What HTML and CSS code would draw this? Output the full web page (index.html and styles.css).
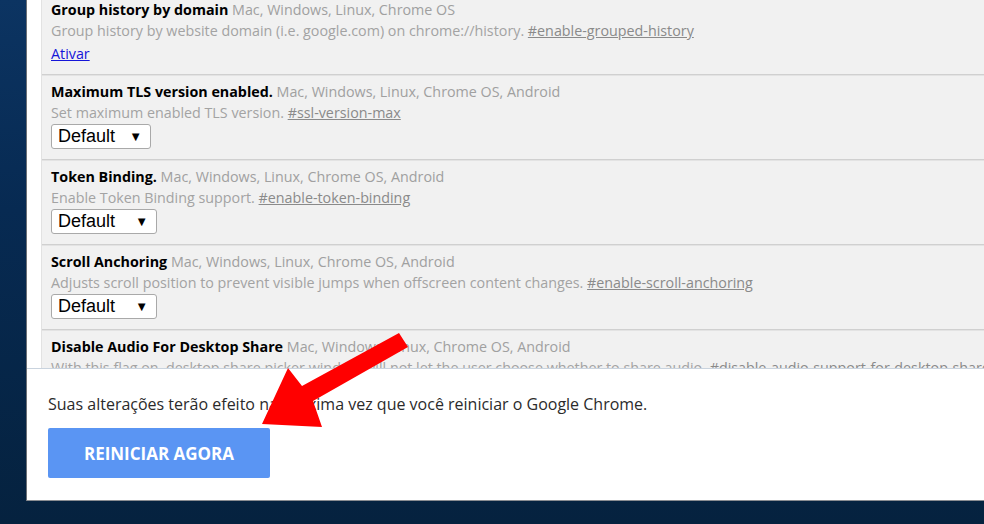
FILE: index.html
```html
<!DOCTYPE html>
<html lang="pt">
<head>
<meta charset="utf-8">
<title>Flags</title>
<link rel="stylesheet" href="styles.css">
</head>
<body>
<div class="desktop">
  <div class="window">
    <div class="content">
      <div class="flags">
        <div class="row first">
          <div class="title"><b>Group history by domain</b> <span class="plat">Mac, Windows, Linux, Chrome OS</span></div>
          <div class="desc">Group history by website domain (i.e. google.com) on chrome://history. <a class="hash">#enable-grouped-history</a></div>
          <div class="action"><a class="enable">Ativar</a></div>
        </div>
        <div class="row">
          <div class="title"><b>Maximum TLS version enabled.</b> <span class="plat">Mac, Windows, Linux, Chrome OS, Android</span></div>
          <div class="desc">Set maximum enabled TLS version. <a class="hash">#ssl-version-max</a></div>
          <div class="select"><span>Default</span><span class="tri">▼</span></div>
        </div>
        <div class="row">
          <div class="title"><b>Token Binding.</b> <span class="plat">Mac, Windows, Linux, Chrome OS, Android</span></div>
          <div class="desc">Enable Token Binding support. <a class="hash">#enable-token-binding</a></div>
          <div class="select wide"><span>Default</span><span class="tri">▼</span></div>
        </div>
        <div class="row">
          <div class="title"><b>Scroll Anchoring</b> <span class="plat">Mac, Windows, Linux, Chrome OS, Android</span></div>
          <div class="desc">Adjusts scroll position to prevent visible jumps when offscreen content changes. <a class="hash">#enable-scroll-anchoring</a></div>
          <div class="select wide"><span>Default</span><span class="tri">▼</span></div>
        </div>
        <div class="row">
          <div class="title"><b>Disable Audio For Desktop Share</b> <span class="plat">Mac, Windows, Linux, Chrome OS, Android</span></div>
          <div class="desc">With this flag on, desktop share picker window will not let the user choose whether to share audio. <a class="hash">#disable-audio-support-for-desktop-share</a></div>
          <div class="select"><span>Default</span><span class="tri">▼</span></div>
        </div>
      </div>
    </div>
    <div class="footer">
      <div class="notice">Suas alterações terão efeito na próxima vez que você reiniciar o Google Chrome.</div>
      <button class="restart">REINICIAR AGORA</button>
    </div>
  </div>
</div>
<svg class="arrow" width="984" height="524" viewBox="0 0 984 524" xmlns="http://www.w3.org/2000/svg">
  <polygon points="399,333 408,347 313,401 322,427 262,424 288,368 302,386" fill="#ff0000"/>
</svg>
</body>
</html>
```
FILE: styles.css
```css
html, body {
  margin: 0;
  padding: 0;
}
body {
  width: 984px;
  height: 524px;
  overflow: hidden;
  position: relative;
  background: linear-gradient(180deg, #0c3462 0%, #072a52 40%, #05223f 100%);
  font-family: "Open Sans", "Noto Sans", sans-serif;
}
.desktop {
  height: 524px;
  padding-left: 26px;
  box-sizing: border-box;
}
.window {
  height: 500px;
  border-left: 1px solid #6b6f75;
  border-bottom: 1px solid #8a8d92;
  background: #ffffff;
  display: flex;
  flex-direction: column;
}
.content {
  flex: 1;
  overflow: hidden;
  padding-left: 14px;
  background: #ffffff;
}
.flags {
  background: #f1f1f1;
  border-left: 1px solid #e2e2e2;
  margin-top: -6px;
  min-height: 400px;
}
.row {
  padding: 6px 10px 10px 9px;
  border-bottom: 1px solid #d0d0d0;
  box-shadow: 0 1px 0 #e3e3e3;
  margin-bottom: 1px;
}
.title {
  font-size: 14.3px;
  line-height: 20px;
  height: 20px;
  white-space: nowrap;
  color: #000;
}
.title b {
  font-weight: 700;
}
.plat {
  color: #a0a0a0;
}
.desc {
  font-size: 14.3px;
  line-height: 21px;
  height: 21px;
  white-space: nowrap;
  color: #a3a3a3;
}
.hash {
  color: #8a8a8a;
  text-decoration: underline;
}
.action {
  margin-top: 3px;
  line-height: 20px;
  height: 20px;
  font-size: 14.3px;
}
.enable {
  color: #1515d8;
  text-decoration: underline;
}
.select {
  margin-top: 1px;
  width: 100px;
  height: 25px;
  box-sizing: border-box;
  border: 1px solid #a9a9a9;
  border-radius: 3px;
  background: #ffffff;
  display: flex;
  align-items: center;
  padding-left: 6px;
  font-family: "Liberation Sans", Arial, sans-serif;
  font-size: 18px;
  color: #000;
}
.select.wide {
  width: 106px;
}
.tri {
  font-size: 13px;
  margin-left: auto;
  margin-right: 8px;
}
.footer {
  border-top: 1px solid #c9d3de;
  padding: 25px 21px 22px;
  background: #ffffff;
}
.notice {
  font-size: 16px;
  line-height: 20px;
  color: #2b2b2b;
  white-space: nowrap;
}
.restart {
  margin-top: 14px;
  width: 222px;
  height: 50px;
  border: none;
  border-radius: 2px;
  background: #5a95f3;
  color: #ffffff;
  font-family: "Open Sans", "Noto Sans", sans-serif;
  font-weight: 700;
  font-size: 17px;
  padding: 0;
  display: block;
}
.arrow {
  position: absolute;
  left: 0;
  top: 0;
  pointer-events: none;
}
```
